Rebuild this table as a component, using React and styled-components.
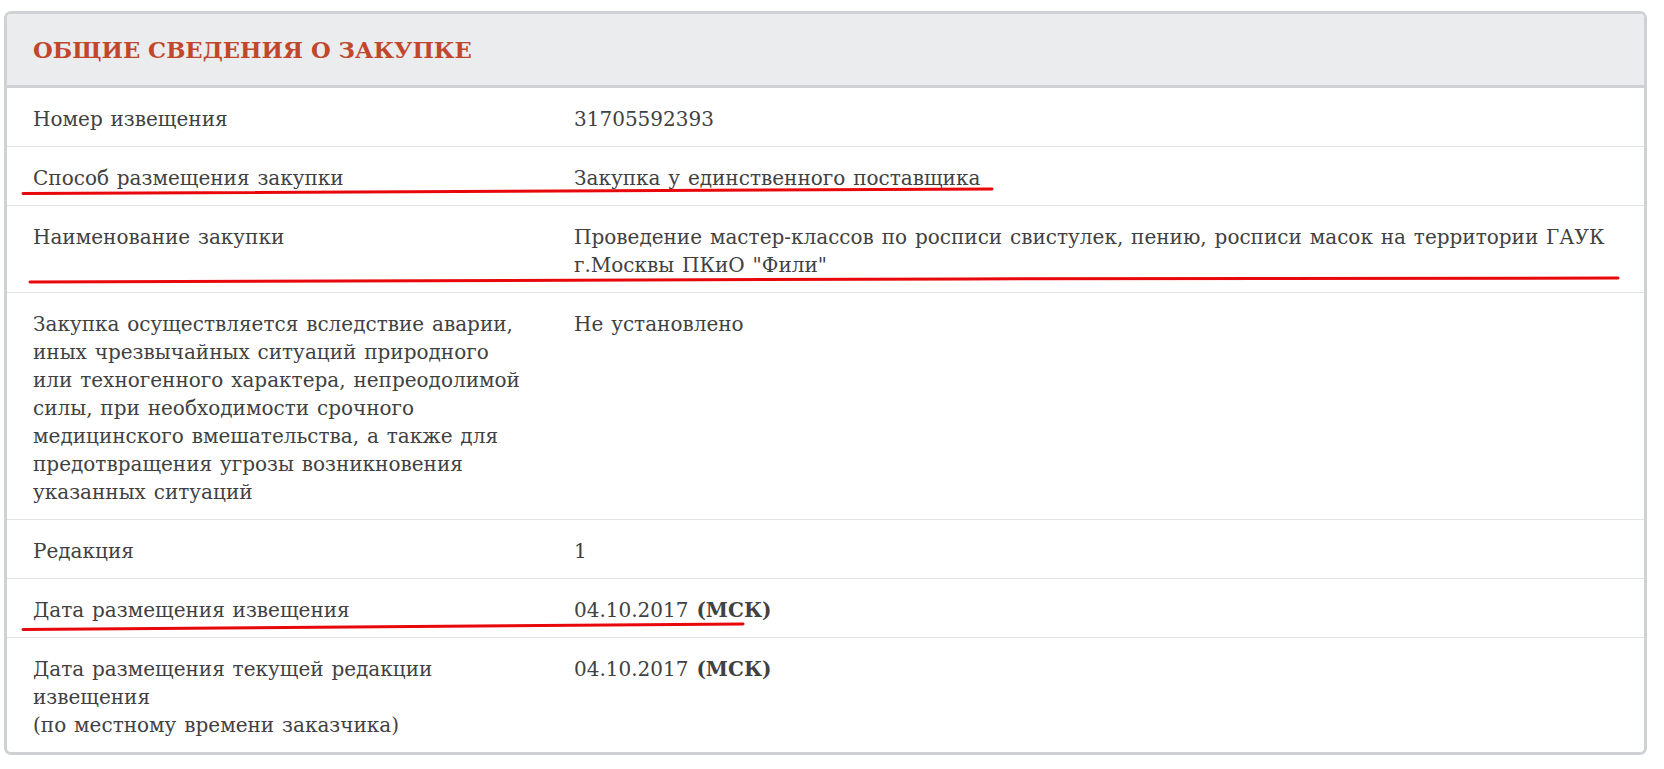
import React from 'react';
import styled, { createGlobalStyle } from 'styled-components';

const GlobalStyle = createGlobalStyle`
  html, body {
    margin: 0;
    padding: 0;
    background: #ffffff;
  }
  body {
    font-family: "DejaVu Serif", "Liberation Serif", serif;
    color: #414141;
  }
`;

const Page = styled.div`
  padding: 11px 17px 13px 4px;
`;

const Panel = styled.section`
  position: relative;
  border: 3px solid #cfd1d5;
  border-radius: 7px;
  background: #fff;
  overflow: hidden;
`;

const Header = styled.header`
  display: flex;
  align-items: center;
  height: 71px;
  padding: 0 26px;
  background: #ebecee;
  border-bottom: 3px solid #cfd1d5;
`;

const Title = styled.h2`
  margin: 0;
  font-size: 22.7px;
  font-weight: bold;
  text-transform: uppercase;
  color: #c1472c;
`;

const Row = styled.div`
  display: grid;
  grid-template-columns: 541px 1fr;
  border-bottom: ${(p) => (p.$last ? 'none' : '1px solid #e2e3e5')};
`;

const Cell = styled.div`
  padding: 17px 26px 13px;
  font-size: 20px;
  line-height: 28px;
  word-spacing: 1.5px;
  color: #414141;
`;

const Strong = styled.b`
  font-weight: bold;
`;

const Marks = styled.svg`
  position: absolute;
  left: -3px;
  top: -3px;
  pointer-events: none;
`;

const Lines = ({ lines }) =>
  lines.map((line, i) => (
    <React.Fragment key={i}>
      {i > 0 && <br />}
      {line}
    </React.Fragment>
  ));

const rows = [
  ['Номер извещения', '31705592393'],
  ['Способ размещения закупки', 'Закупка у единственного поставщика'],
  [
    'Наименование закупки',
    'Проведение мастер-классов по росписи свистулек, пению, росписи масок на территории ГАУК г.Москвы ПКиО "Фили"',
  ],
  [
    <Lines
      lines={[
        'Закупка осуществляется вследствие аварии,',
        'иных чрезвычайных ситуаций природного',
        'или техногенного характера, непреодолимой',
        'силы, при необходимости срочного',
        'медицинского вмешательства, а также для',
        'предотвращения угрозы возникновения',
        'указанных ситуаций',
      ]}
    />,
    'Не установлено',
  ],
  ['Редакция', '1'],
  [
    'Дата размещения извещения',
    <>
      04.10.2017 <Strong>(МСК)</Strong>
    </>,
  ],
  [
    <Lines
      lines={['Дата размещения текущей редакции', 'извещения', '(по местному времени заказчика)']}
    />,
    <>
      04.10.2017 <Strong>(МСК)</Strong>
    </>,
  ],
];

// hand-drawn red underlines, in panel coordinates (panel top-left = page 4,11)
const marks = [
  'M19 182.5 C 250 180, 600 178.5, 988 178',
  'M26 271 C 500 268.5, 1100 267.5, 1614 267',
  'M19 618.5 C 250 617, 500 614.5, 739 613',
];

export default function App() {
  return (
    <Page>
      <GlobalStyle />
      <Panel>
        <Header>
          <Title>Общие сведения о закупке</Title>
        </Header>
        {rows.map(([label, value], i) => (
          <Row key={i} $last={i === rows.length - 1}>
            <Cell>{label}</Cell>
            <Cell>{value}</Cell>
          </Row>
        ))}
        <Marks width="1643" height="745" viewBox="0 0 1643 745">
          {marks.map((d, i) => (
            <path key={i} d={d} stroke="#e8080b" strokeWidth="3" fill="none" strokeLinecap="round" />
          ))}
        </Marks>
      </Panel>
    </Page>
  );
}
